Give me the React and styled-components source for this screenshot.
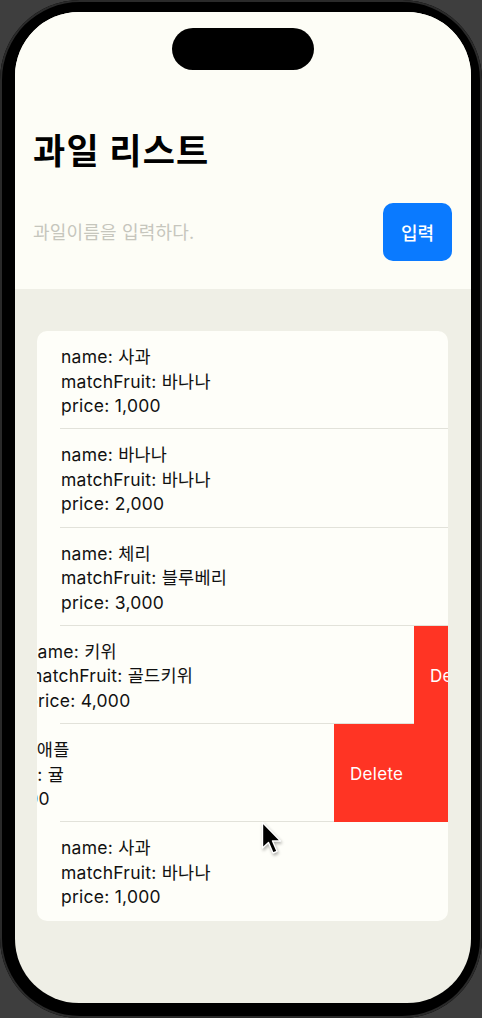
import React from "react";
import styled, { createGlobalStyle } from "styled-components";

const GlobalStyle = createGlobalStyle`
    html, body {
        margin: 0;
        padding: 0;
        background: #3e3e3e;
    }
    body {
        font-family: Inter, "Noto Sans CJK KR", sans-serif;
        -webkit-font-smoothing: antialiased;
    }
`;

const Phone = styled.div`
    position: relative;
    width: 482px;
    height: 1018px;
    box-sizing: border-box;
    padding: 12px 11px 15px 15px;
    background: #000;
    border-radius: 80px;
    box-shadow: inset 0 0 0 2px #2a2a2a;
`;

const Screen = styled.div`
    height: 100%;
    display: flex;
    flex-direction: column;
    background: #efefe6;
    border-radius: 64px;
    overflow: hidden;
`;

const Header = styled.header`
    display: flex;
    flex-direction: column;
    background: #fdfdf6;
    padding: 16px 19px 28px 18px;
`;

const Island = styled.div`
    align-self: center;
    width: 142px;
    height: 42px;
    margin-left: 1px;
    background: #000;
    border-radius: 21px;
`;

const Title = styled.h1`
    margin: 61px 0 0;
    font-size: 35px;
    line-height: 40px;
    font-weight: 700;
    color: #000;
    letter-spacing: 1.2px;
`;

const InputRow = styled.div`
    display: flex;
    align-items: center;
    gap: 12px;
    margin-top: 32px;
`;

const Input = styled.input`
    flex: 1;
    min-width: 0;
    border: none;
    outline: none;
    background: transparent;
    padding: 0;
    font-family: inherit;
    font-size: 18px;
    letter-spacing: 0.2px;
    color: #000;

    &::placeholder {
        color: #c6c6bd;
    }
`;

const SubmitButton = styled.button`
    width: 69px;
    height: 58px;
    border: none;
    border-radius: 10px;
    background: #0a7aff;
    color: #fff;
    font-family: inherit;
    font-size: 18px;
    font-weight: 500;
`;

const ListArea = styled.main`
    flex: 1;
    padding: 42px 23px 0 22px;
`;

const Card = styled.ul`
    list-style: none;
    margin: 0;
    padding: 0;
    background: #fefef9;
    border-radius: 10px;
    overflow: hidden;
`;

const Row = styled.li`
    position: relative;
    height: 98.3px;
    overflow: hidden;

    &:not(:last-child)::after {
        content: "";
        position: absolute;
        left: 23px;
        right: 0;
        bottom: 0;
        height: 1px;
        background: #e2e2da;
    }
`;

const RowContent = styled.div`
    padding: 14px 0 0 24px;
    transform: translateX(${(p) => -p.$swipe}px);
`;

const Line = styled.div`
    font-size: 17.5px;
    line-height: 24.5px;
    letter-spacing: 0.25px;
    color: #111;
    white-space: nowrap;
`;

const DeleteAction = styled.div`
    position: absolute;
    top: 0;
    right: 0;
    bottom: 0;
    z-index: 1;
    width: ${(p) => p.$swipe}px;
    display: flex;
    align-items: center;
    padding: 2px 0 0 16px;
    box-sizing: border-box;
    overflow: hidden;
    background: #ff3424;
    color: #fff;
    font-size: 17px;
    letter-spacing: 0.3px;
    white-space: nowrap;
`;

const Cursor = styled.svg`
    position: absolute;
    left: 261px;
    top: 821px;
    filter: drop-shadow(1px 2px 1.5px rgba(0, 0, 0, 0.3));
`;

const fruits = [
    { name: "사과", matchFruit: "바나나", price: 1000, swipe: 0 },
    { name: "바나나", matchFruit: "바나나", price: 2000, swipe: 0 },
    { name: "체리", matchFruit: "블루베리", price: 3000, swipe: 0 },
    { name: "키위", matchFruit: "골드키위", price: 4000, swipe: 34 },
    { name: "파인애플", matchFruit: "귤", price: 5000, swipe: 114 },
    { name: "사과", matchFruit: "바나나", price: 1000, swipe: 0 },
];

const FruitRow = ({ fruit }) => (
    <Row>
        <RowContent $swipe={fruit.swipe}>
            <Line>name: {fruit.name}</Line>
            <Line>matchFruit: {fruit.matchFruit}</Line>
            <Line>price: {fruit.price.toLocaleString("en-US")}</Line>
        </RowContent>
        {fruit.swipe > 0 && <DeleteAction $swipe={fruit.swipe}>Delete</DeleteAction>}
    </Row>
);

const App = () => {
    return (
        <>
            <GlobalStyle />
            <Phone>
                <Screen>
                    <Header>
                        <Island />
                        <Title>과일 리스트</Title>
                        <InputRow>
                            <Input placeholder="과일이름을 입력하다." />
                            <SubmitButton>입력</SubmitButton>
                        </InputRow>
                    </Header>
                    <ListArea>
                        <Card>
                            {fruits.map((fruit, i) => (
                                <FruitRow key={i} fruit={fruit} />
                            ))}
                        </Card>
                    </ListArea>
                </Screen>
                <Cursor width="22" height="36" viewBox="0 0 22 36">
                    <path
                        d="M1.5 1.5 L1.5 27 L7.5 21.5 L12 32 L16 30.3 L11.5 20 L19.5 20 Z"
                        fill="#000"
                        stroke="#fff"
                        strokeWidth="1.4"
                        strokeLinejoin="round"
                    />
                </Cursor>
            </Phone>
        </>
    );
};

export default App;
